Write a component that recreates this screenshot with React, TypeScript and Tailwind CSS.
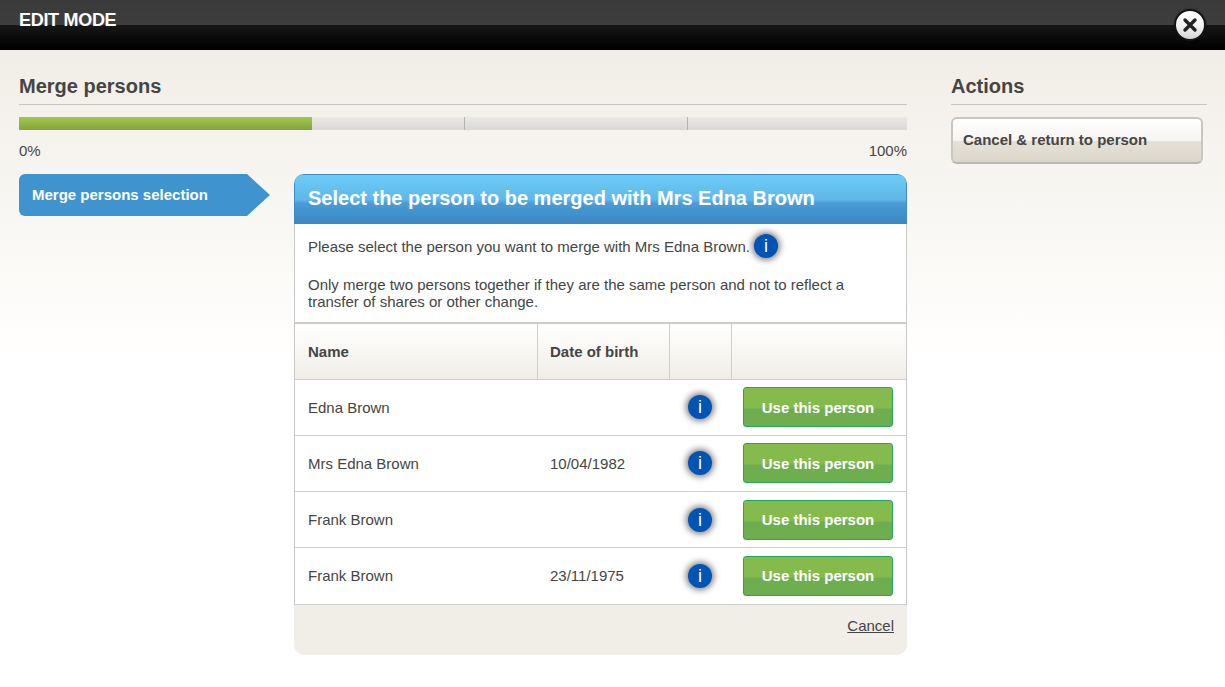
import React from "react";

interface Person {
  name: string;
  dob: string;
  height: string;
  nudge: string;
  textNudge: string;
}

const persons: Person[] = [
  { name: "Edna Brown", dob: "", height: "h-[56px]", nudge: "mb-[1px]", textNudge: "pt-[2px]" },
  { name: "Mrs Edna Brown", dob: "10/04/1982", height: "h-[56px]", nudge: "mb-[1px]", textNudge: "pt-[2px]" },
  { name: "Frank Brown", dob: "", height: "h-[56px]", nudge: "mb-0", textNudge: "pt-[2px]" },
  { name: "Frank Brown", dob: "23/11/1975", height: "h-[57px]", nudge: "mb-[1px]", textNudge: "pt-0" },
];

function InfoIcon() {
  return (
    <span className="flex h-[24px] w-[24px] shrink-0 items-center justify-center rounded-full bg-[#0054b4] text-[18px] leading-none text-white shadow-[0_0_6px_2px_rgba(0,0,0,0.5)]">
      i
    </span>
  );
}

function UseButton() {
  return (
    <button className="block h-[40px] w-[150px] rounded-[3px] border border-[#1fa855] bg-[linear-gradient(#84bb4c_0%,#84bb4c_52%,#6eae4f_56%,#6eae4f_100%)] pt-[2px] text-[15px] font-bold text-white">
      Use this person
    </button>
  );
}

function CloseButton() {
  return (
    <button className="absolute right-[19px] top-[9px] flex h-[32px] w-[32px] items-center justify-center rounded-full border-[2px] border-[#141414] bg-[linear-gradient(#ffffff,#f4f4f4_50%,#d4d4d4)] shadow-[0_0_2px_rgba(0,0,0,0.6)]">
      <svg width="16" height="16" viewBox="0 0 16 16">
        <path d="M3 3 L13 13 M13 3 L3 13" stroke="#222" strokeWidth="3.4" strokeLinecap="round" />
      </svg>
    </button>
  );
}

export default function App() {
  return (
    <div className="relative min-h-[687px] overflow-hidden bg-white font-['Liberation_Sans',Arial,sans-serif] text-[#454545]">
      <div className="relative h-[50px] bg-[linear-gradient(#3a3a3a_0%,#3e3e3e_50%,#171717_50%,#000000_100%)]">
        <div className="px-[19px] pt-[10px] text-[18px] font-bold leading-[20px] tracking-[-0.3px] text-white">
          EDIT MODE
        </div>
        <CloseButton />
      </div>

      <div className="flex h-[637px] bg-[linear-gradient(#f1eee7_0px,#fffefd_290px,#ffffff_320px)] pl-[19px] pr-[18px] pt-[24px]">
        <div className="w-[888px]">
          <h1 className="h-[31px] border-b border-[#c9c4bc] text-[20px] font-bold leading-[24px]">
            Merge persons
          </h1>

          <div className="mt-[12px] flex h-[13px] bg-[linear-gradient(#ebe9e6,#d9d8d4)]">
            <div className="w-[293px] bg-[linear-gradient(#a1c94a,#84a33f)]" />
            <div className="w-[153px] border-r border-[#b3b3b1]" />
            <div className="w-[223px] border-r border-[#b3b3b1]" />
          </div>

          <div className="mt-[12px] flex justify-between text-[15px] leading-[17px]">
            <span>0%</span>
            <span>100%</span>
          </div>

          <div className="mt-[15px] flex gap-[24px]">
            <div className="flex h-[42px] w-[251px] shrink-0 items-center rounded-l-[6px] bg-[#3f94cf] pl-[13px] text-[15px] font-bold text-white [clip-path:polygon(0_0,228px_0,100%_50%,228px_100%,0_100%)]">
              Merge persons selection
            </div>

            <div className="w-[613px] overflow-hidden rounded-[10px] bg-[#f1eee7]">
              <div className="h-[50px] rounded-t-[8px] border border-b-0 border-[#3a8cc8] bg-[linear-gradient(#6ecbf6_0%,#5fb8e8_50%,#4a9bd6_58%,#3a87c4_100%)] pl-[13px] pt-[11px] text-[20px] font-bold leading-[24px] text-white">
                Select the person to be merged with Mrs Edna Brown
              </div>

              <div className="border-x border-[#c9c9c9] bg-white">
                <div className="h-[98px] pl-[13px] pr-[40px] text-[15px] leading-[17px]">
                  <div className="flex h-[44px] items-center gap-[4px]">
                    <span>Please select the person you want to merge with Mrs Edna Brown.</span>
                    <InfoIcon />
                  </div>
                  <p className="mt-[8px]">
                    Only merge two persons together if they are the same person and not to reflect a
                    transfer of shares or other change.
                  </p>
                </div>

                <div className="flex h-[58px] border-y-[2px] border-b border-[#cccccc] border-b-[#cfcfcf] bg-[linear-gradient(#ffffff,#f1eee7)] text-[15px] font-bold">
                  <div className="flex w-[243px] items-center border-r border-[#cfcfcf] pl-[13px] pt-[2px]">Name</div>
                  <div className="flex w-[132px] items-center border-r border-[#cfcfcf] pl-[12px] pt-[2px]">Date of birth</div>
                  <div className="w-[62px] border-r border-[#cfcfcf]" />
                  <div className="flex-1" />
                </div>

                {persons.map((person, i) => (
                  <div
                    key={i}
                    className={`flex items-center border-b border-[#cfcfcf] text-[15px] ${person.height}`}
                  >
                    <div className={`w-[243px] pl-[13px] ${person.textNudge}`}>{person.name}</div>
                    <div className={`w-[132px] pl-[12px] ${person.textNudge}`}>{person.dob}</div>
                    <div className={`flex w-[60px] justify-center ${person.nudge}`}>
                      <InfoIcon />
                    </div>
                    <div className={`pl-[13px] ${person.nudge}`}>
                      <UseButton />
                    </div>
                  </div>
                ))}
              </div>

              <div className="flex h-[50px] justify-end pr-[13px] pt-[12px] text-[15px] leading-[17px]">
                <a className="underline">Cancel</a>
              </div>
            </div>
          </div>
        </div>

        <div className="ml-[44px] w-[256px]">
          <h2 className="h-[31px] border-b border-[#c9c4bc] text-[20px] font-bold leading-[24px]">
            Actions
          </h2>
          <button className="mt-[12px] flex h-[47px] w-[252px] items-center rounded-[6px] border-[2px] border-[#c8c6c1] border-b-[#b9b6b0] bg-[linear-gradient(#ffffff_0%,#f7f5f1_50%,#e6e1d7_52%,#dcd6ca_100%)] pl-[10px] text-[15px] font-bold">
            Cancel &amp; return to person
          </button>
        </div>
      </div>
    </div>
  );
}
